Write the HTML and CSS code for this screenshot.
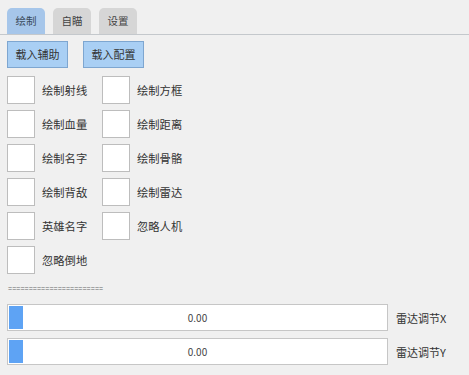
FILE: index.html
```html
<!DOCTYPE html>
<html lang="zh">
<head>
<meta charset="utf-8">
<link rel="stylesheet" href="styles.css">
</head>
<body>
<div class="app">
  <div class="tabs">
    <div class="tab active">绘制</div>
    <div class="tab">自瞄</div>
    <div class="tab">设置</div>
  </div>
  <div class="buttons">
    <div class="btn">载入辅助</div>
    <div class="btn">载入配置</div>
  </div>
  <div class="grid">
    <div class="check"><span class="box"></span><span class="label">绘制射线</span></div>
    <div class="check"><span class="box"></span><span class="label">绘制方框</span></div>
    <div class="check"><span class="box"></span><span class="label">绘制血量</span></div>
    <div class="check"><span class="box"></span><span class="label">绘制距离</span></div>
    <div class="check"><span class="box"></span><span class="label">绘制名字</span></div>
    <div class="check"><span class="box"></span><span class="label">绘制骨骼</span></div>
    <div class="check"><span class="box"></span><span class="label">绘制背敌</span></div>
    <div class="check"><span class="box"></span><span class="label">绘制雷达</span></div>
    <div class="check"><span class="box"></span><span class="label">英雄名字</span></div>
    <div class="check"><span class="box"></span><span class="label">忽略人机</span></div>
    <div class="check"><span class="box"></span><span class="label">忽略倒地</span></div>
  </div>
  <div class="sep">=======================</div>
  <div class="sliders">
    <div class="slider-row">
      <div class="slider"><span class="handle"></span><span class="value">0.00</span></div>
      <span class="slabel">雷达调节X</span>
    </div>
    <div class="slider-row">
      <div class="slider"><span class="handle"></span><span class="value">0.00</span></div>
      <span class="slabel">雷达调节Y</span>
    </div>
  </div>
</div>
</body>
</html>
```
FILE: styles.css
```css
html, body {
  margin: 0;
  padding: 0;
  background: #f0f0f0;
}
body {
  font-family: "Noto Sans CJK SC", "Noto Sans", sans-serif;
  color: #333;
  width: 469px;
  height: 375px;
  overflow: hidden;
}
.app {
  display: flex;
  flex-direction: column;
}
.tabs {
  display: flex;
  gap: 8px;
  padding: 8px 0 0 7px;
  border-bottom: 1px solid #c4c8cc;
  height: 26px;
}
.tab {
  width: 38px;
  height: 26px;
  border-radius: 5px 5px 0 0;
  background: #d6d6d6;
  font-size: 10.5px;
  line-height: 26px;
  text-align: center;
  color: #444;
}
.tab.active {
  background: #a6c6ea;
  color: #3a4a5a;
}
.buttons {
  display: flex;
  gap: 15px;
  padding: 6px 0 0 7px;
}
.btn {
  box-sizing: border-box;
  width: 61px;
  height: 27px;
  background: #a9cff4;
  border: 1px solid #7ea6d0;
  font-size: 11px;
  line-height: 25px;
  text-align: center;
  color: #333;
}
.grid {
  display: grid;
  grid-template-columns: 95px 95px;
  row-gap: 6px;
  padding: 8px 0 0 7px;
}
.check {
  display: flex;
  align-items: center;
  gap: 7px;
  height: 28px;
}
.box {
  box-sizing: border-box;
  width: 28px;
  height: 28px;
  background: #fff;
  border: 1px solid #bdbdbd;
  flex: none;
}
.label {
  font-size: 11.3px;
  color: #333;
}
.sep {
  padding: 7px 0 0 8px;
  height: 16px;
  font-family: "Liberation Sans", sans-serif;
  font-size: 7px;
  line-height: 16px;
  letter-spacing: 0.05px;
  color: #666;
}
.sliders {
  display: flex;
  flex-direction: column;
  gap: 7px;
  padding: 7px 0 0 7px;
}
.slider-row {
  display: flex;
  align-items: center;
  gap: 8px;
}
.slider {
  box-sizing: border-box;
  position: relative;
  width: 381px;
  height: 27px;
  background: #fff;
  border: 1px solid #c6c6c6;
  display: flex;
  align-items: center;
  justify-content: center;
}
.handle {
  position: absolute;
  left: 1px;
  top: 1px;
  bottom: 1px;
  width: 14px;
  background: #5ea3f4;
}
.value {
  font-size: 10px;
  color: #444;
}
.slabel {
  font-size: 11px;
  color: #333;
}
```
